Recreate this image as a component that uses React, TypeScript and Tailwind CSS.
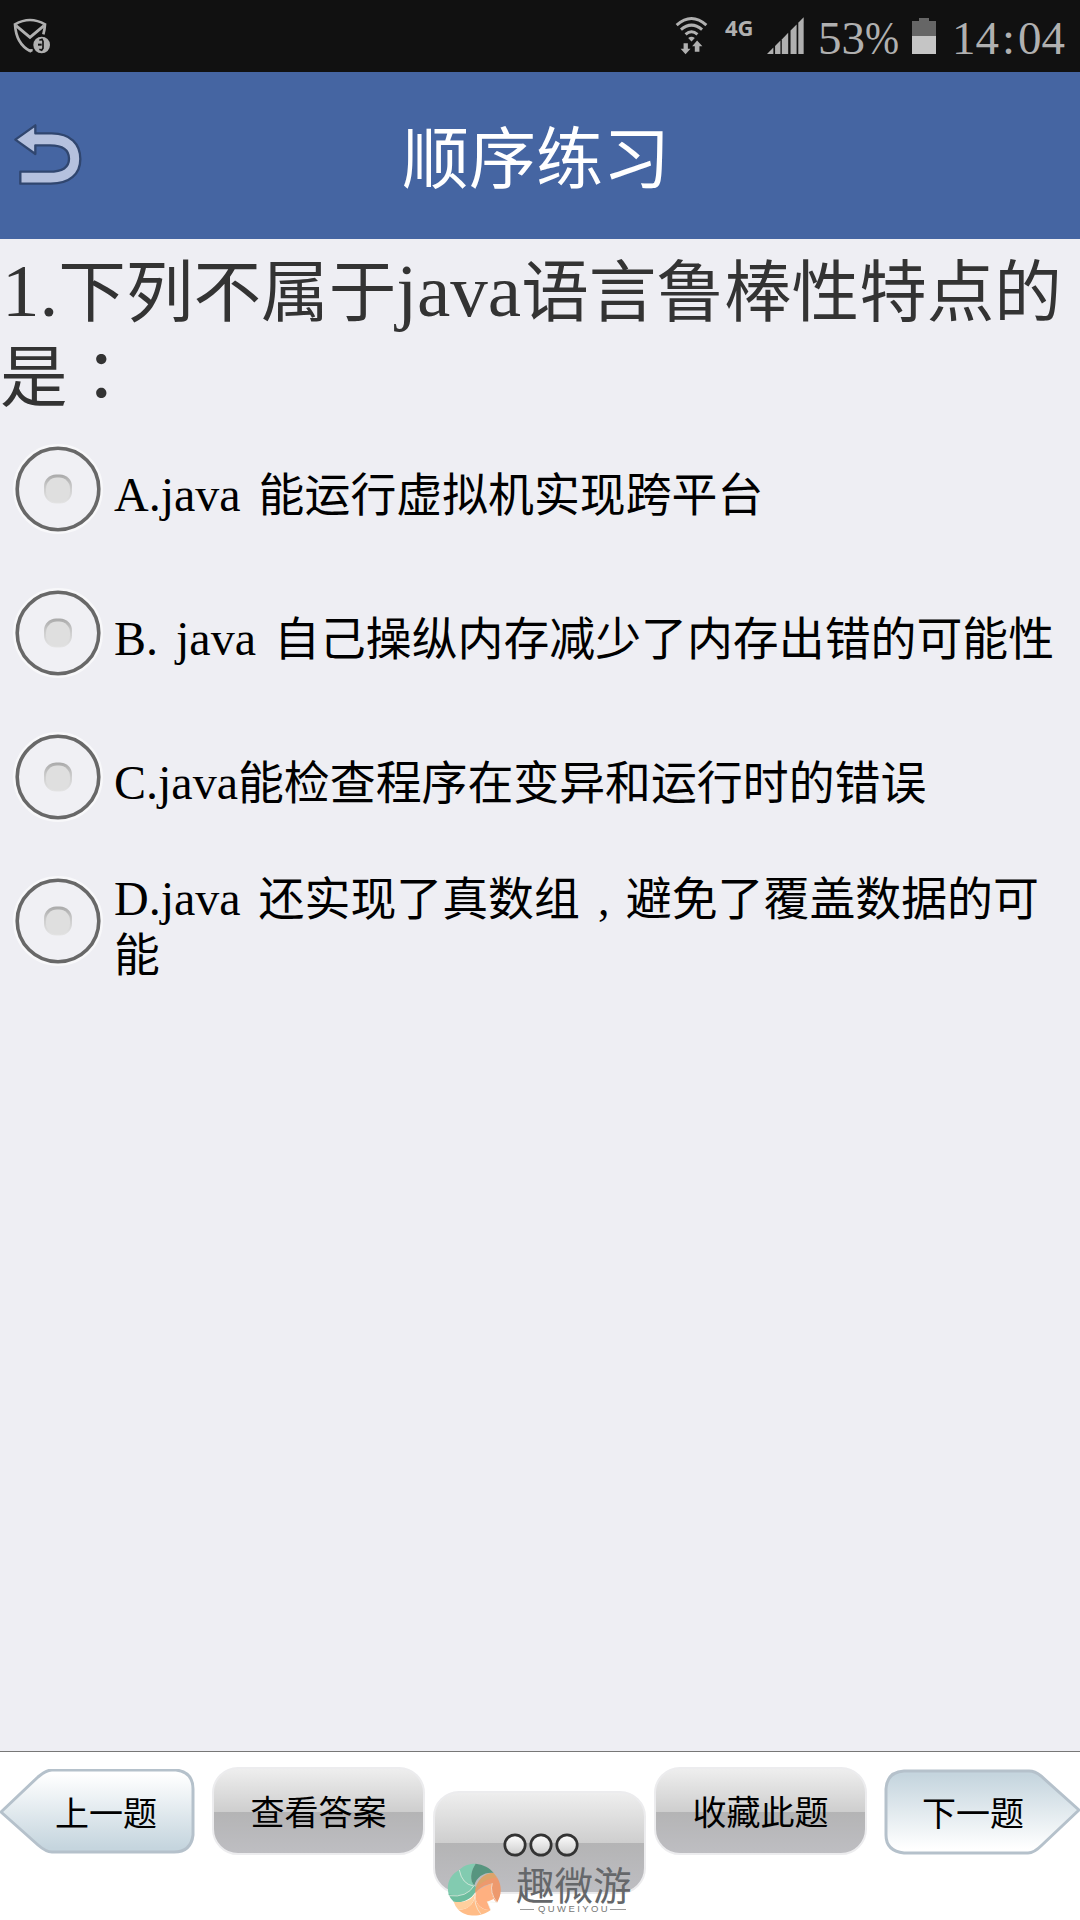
import type { ReactNode } from "react";

const options = [
  { id: "A", lines: ["A.java 能运行虚拟机实现跨平台"] },
  { id: "B", lines: ["B. java 自己操纵内存减少了内存出错的可能性"] },
  { id: "C", lines: ["C.java能检查程序在变异和运行时的错误"] },
  { id: "D", lines: ["D.java 还实现了真数组，避免了覆盖数据的可", "能"] },
];

// Latin runs use a serif face a little larger than the Chinese text,
// punctuation sits in the middle of a full-width cell
const MixedText = ({ text, latin }: { text: string; latin: string }) => (
  <>
    {text.split(/([\x20-\x7e]+|[，：])/).map((part, index) => {
      if (/^[\x20-\x7e]+$/.test(part)) {
        return (
          <span key={index} className={latin}>
            {part}
          </span>
        );
      }
      if (part === "，") {
        return (
          <span
            key={index}
            className="inline-block w-[46px] pl-0.5 text-center font-['Liberation_Serif',serif] leading-none"
          >
            ,
          </span>
        );
      }
      if (part === "：") {
        return (
          <span key={index} lang="zh-TW" className="font-['Noto_Sans_CJK_TC',sans-serif]">
            {part}
          </span>
        );
      }
      return part;
    })}
  </>
);

const StatusBar = () => (
  <div className="flex h-[72px] bg-[#111111] text-[#b0b0b0]">
    <svg className="ml-3 mt-4 h-10 w-10" viewBox="36 48 120 120" fill="none">
      <path
        d="M90 153C60 137 47 110 45 73Q90 47 135 73Q134 90 130 103"
        stroke="#b0b0b0"
        strokeWidth="8"
      />
      <path d="M48 77L90 112L132 77" stroke="#b0b0b0" strokeWidth="9" />
      <path d="M84 148L90 158L98 154V147Z" fill="#b0b0b0" />
      <circle cx="125" cy="135" r="25" fill="#b0b0b0" />
      <path d="M118 121L126 118L129 124V145L125 151L118 148" stroke="#111111" strokeWidth="5" />
      <path d="M114 134H125" stroke="#111111" strokeWidth="6" />
    </svg>

    <div className="ml-auto flex pr-3">
      <svg className="mt-[15px] h-10 w-[33px]" viewBox="45 45 100 120" fill="none">
        <path
          d="M50 75Q95 35 140 75M63 89Q95 61 127 89M77 103Q95 87 113 103"
          stroke="#b0b0b0"
          strokeWidth="9"
        />
        <path d="M85 114Q95 107 105 114L95 125Z" fill="#b0b0b0" />
        <path d="M71 130H84V147H92L77 163L62 147H71Z" fill="#b0b0b0" />
        <path d="M105 156H119V139H128L112 122L97 139H105Z" fill="#b0b0b0" />
      </svg>
      <span className="ml-[17px] mt-[15px] w-[42px] font-['Noto_Sans',sans-serif] text-[22px] font-bold leading-6">
        4G
      </span>
      <svg className="mt-[17px] h-[37px] w-[37px]" viewBox="320 52 110 110" fill="#b0b0b0">
        <path d="M320 162L339 143V162Z" />
        <path d="M344 138L360 122V162H344Z" />
        <path d="M364 119L383 99V162H364Z" />
        <path d="M390 92L408 74V162H390Z" />
        <path d="M413 69L429 53V162H413Z" />
      </svg>
      <span className="ml-[14px] mt-[10px] w-[94px] whitespace-nowrap font-['Liberation_Serif',serif] text-[47px] leading-[56px]">
        53
        <span className="inline-block origin-left scale-x-[0.87]">%</span>
      </span>
      <svg className="mt-[18px] h-9 w-6" viewBox="0 0 24 36">
        <path d="M0 3H7V0H17V3H24V18H0Z" fill="#666666" />
        <path d="M0 18H24V36H0Z" fill="#c5c5c5" />
      </svg>
      <span className="ml-4 mt-[10px] w-[116px] whitespace-nowrap font-['Liberation_Serif',serif] text-[47px] leading-[56px]">
        14<span className="mx-[3px]">:</span>04
      </span>
    </div>
  </div>
);

const Header = () => (
  <div className="grid h-[167px] grid-cols-[100px_1fr_108px] items-center bg-[#4565a2]">
    <button className="h-[70px] w-[84px] pl-[11px]">
      <svg className="h-[70px] w-[74px]" viewBox="36 366 222 210">
        <path
          d="M49 422L109 379V403H158C215 403 244 435 244 480C244 525 213 554 155 554H64V518H150C190 518 210 505 210 479C210 453 190 439 153 439H109V465Z"
          fill="#b5c1de"
          stroke="#30466f"
          strokeWidth="7"
          strokeLinejoin="round"
        />
      </svg>
    </button>
    <h1 className="pb-1 text-center text-[67px] leading-[96px] text-white">顺序练习</h1>
  </div>
);

const Radio = () => (
  <svg className="ml-3 h-[92px] w-[92px] shrink-0" viewBox="0 0 92 92">
    <defs>
      <linearGradient id="dot" x1="0" y1="0" x2="0" y2="1">
        <stop offset="0" stopColor="#a9a9a9" />
        <stop offset="0.5" stopColor="#cfcfcf" />
        <stop offset="1" stopColor="#e4e4e4" />
      </linearGradient>
    </defs>
    <circle cx="46" cy="46" r="43" fill="#f0f0f4" stroke="#f8f8fa" strokeWidth="4" />
    <circle cx="46" cy="46" r="40.8" fill="none" stroke="#686868" strokeWidth="3.6" />
    <rect x="32" y="31.5" width="28" height="29" rx="12" fill="url(#dot)" />
    <rect x="34" y="34.5" width="24" height="25" rx="11" fill="#dfdfdf" />
  </svg>
);

const GrayButton = ({ tall, children }: { tall?: boolean; children: ReactNode }) => (
  <button
    className={`flex w-[213px] shrink-0 items-center justify-center rounded-[26px] border-2 border-[#ececee] bg-linear-[to_bottom,#eeeeee_0%,#cecece_51%,#b4b4b5_51%,#bebec2_100%] text-[34px] ${
      tall ? "mt-[39px] h-[103px]" : "mt-[15px] h-[88px] pb-0.5"
    }`}
  >
    {children}
  </button>
);

const ArrowButton = ({ next, children }: { next?: boolean; children: ReactNode }) => (
  <button className="relative mt-[17px] h-[86px] w-[196px] shrink-0 pb-0.5 text-[34px]">
    <svg className="absolute inset-0 h-full w-full" viewBox="0 0 196 86">
      <defs>
        <linearGradient id={next ? "next" : "prev"} x1="0" y1="0" x2="0" y2="1">
          <stop offset="0.05" stopColor={next ? "#c5d5de" : "#ffffff"} />
          <stop offset="0.95" stopColor={next ? "#ffffff" : "#c5d5de"} />
        </linearGradient>
      </defs>
      <path
        d={
          next
            ? "M20 2H145Q151 2 157 7L195 41L158 76Q150 84 144 84H20Q2 82 2 66V20Q3 3 20 2Z"
            : "M176 1H52Q46 1 38 8L1 43L38 76Q46 83 52 83H174Q191 83 193 66V20Q193 3 176 1Z"
        }
        fill={next ? "url(#next)" : "url(#prev)"}
        stroke="#b5c1cb"
        strokeWidth="3"
      />
    </svg>
    <span className={`relative ${next ? "-left-[9px]" : "left-[8px]"}`}>{children}</span>
  </button>
);

const Watermark = () => (
  <div className="absolute left-[447px] top-[111px] flex w-[190px]">
    <svg className="h-[54px] w-[54px] shrink-0" viewBox="82 370 162 162">
      <path d="M119 390C135 376 149 372 168 372C151 397 151 424 164 437C149 465 127 474 88 468C78 434 90 406 119 390Z" fill="#82cbb0" />
      <path d="M168 372C190 374 211 385 222 400C194 397 171 412 164 437C151 424 151 397 168 372Z" fill="#57957f" />
      <path d="M164 437L172 447C161 476 132 492 102 486Q92 478 86 462C118 474 146 465 164 437Z" fill="#6dbd9e" />
      <path d="M222 400L232 413C210 422 180 440 167 460C164 430 192 397 222 400Z" fill="#dca46b" />
      <path d="M232 413C250 443 244 470 232 489C214 475 210 443 218 431C194 437 179 445 167 460C174 433 200 417 232 413Z" fill="#ed996d" />
      <path d="M167 460C164 492 185 513 213 511C188 531 144 536 116 510C149 512 167 486 167 460Z" fill="#ffbc87" />
      <path d="M102 486C132 491 157 481 167 460C166 487 149 512 116 510Q106 500 102 486Z" fill="#ffcf9e" />
      <path d="M167 460Q179 445 218 431Q210 455 222 478L203 486L213 511C185 513 164 492 167 460Z" fill="#ffb080" />
      <path d="M218 431Q209 457 232 489L203 486L213 511" fill="none" stroke="#f3f3eb" strokeWidth="2" />
      <path d="M119 391Q127 433 161 439M88 468Q142 475 164 437M167 460Q160 495 184 524" fill="none" stroke="#f3f3eb" strokeWidth="2" />
    </svg>
    <div className="ml-[15px] w-[118px] pt-0.5 text-[#65676a]">
      <div className="whitespace-nowrap text-[38.5px] leading-9">趣微游</div>
      <div className="mt-[3px] flex items-center gap-1 pl-1">
        <span className="h-px w-3.5 bg-[#999999]" />
        <span className="font-['Liberation_Sans',sans-serif] text-[9.5px] leading-[10px] tracking-[2.4px] text-[#777777]">
          QUWEIYOU
        </span>
        <span className="-ml-1 h-px w-4 bg-[#999999]" />
      </div>
    </div>
  </div>
);

const BottomBar = () => (
  <div className="relative flex h-[169px] border-t border-[#777777] bg-white">
    <ArrowButton>上一题</ArrowButton>
    <div className="ml-4 flex gap-2">
      <GrayButton>查看答案</GrayButton>
      <GrayButton tall>
        <svg className="ml-[2px] mt-1 h-[26px] w-[78px]" viewBox="0 0 78 26">
          <defs>
            <linearGradient id="ring" x1="0" y1="0" x2="0" y2="1">
              <stop offset="0" stopColor="#ffffff" />
              <stop offset="1" stopColor="#cccccc" />
            </linearGradient>
          </defs>
          {[13, 39, 65].map((cx) => (
            <circle key={cx} cx={cx} cy="13" r="10.2" fill="url(#ring)" stroke="#333333" strokeWidth="2.7" />
          ))}
        </svg>
      </GrayButton>
      <GrayButton>收藏此题</GrayButton>
    </div>
    <div className="ml-auto">
      <ArrowButton next>下一题</ArrowButton>
    </div>
    <Watermark />
  </div>
);

const App = () => {
  return (
    <div
      lang="zh-CN"
      className="flex h-[1920px] w-[1080px] flex-col overflow-hidden bg-[#eeeef3] font-['Noto_Sans_CJK_SC',sans-serif] text-black"
    >
      <StatusBar />
      <Header />
      <div className="flex-1">
        <h2 className="h-[178px] whitespace-nowrap pl-0.5 pt-[5px] text-[67.6px] leading-[85px] text-[#333333]">
          <MixedText
            text="1.下列不属于java语言鲁棒性特点的"
            latin="font-['Liberation_Serif',serif] text-[75px] leading-none"
          />
          <br />
          <span className="-ml-0.5">
            <MixedText text="是：" latin="" />
          </span>
        </h2>
        {options.map((option) => (
          <div key={option.id} className="flex h-36 items-center">
            <Radio />
            <div className="ml-[10px] mt-1 whitespace-nowrap text-[45.9px] leading-[56px]">
              {option.lines.map((line) => (
                <div key={line} className="h-14">
                  <MixedText
                    text={line}
                    latin="whitespace-pre font-['Liberation_Serif',serif] text-[48px] leading-none [word-spacing:6px]"
                  />
                </div>
              ))}
            </div>
          </div>
        ))}
      </div>
      <BottomBar />
    </div>
  );
};

export default App;
